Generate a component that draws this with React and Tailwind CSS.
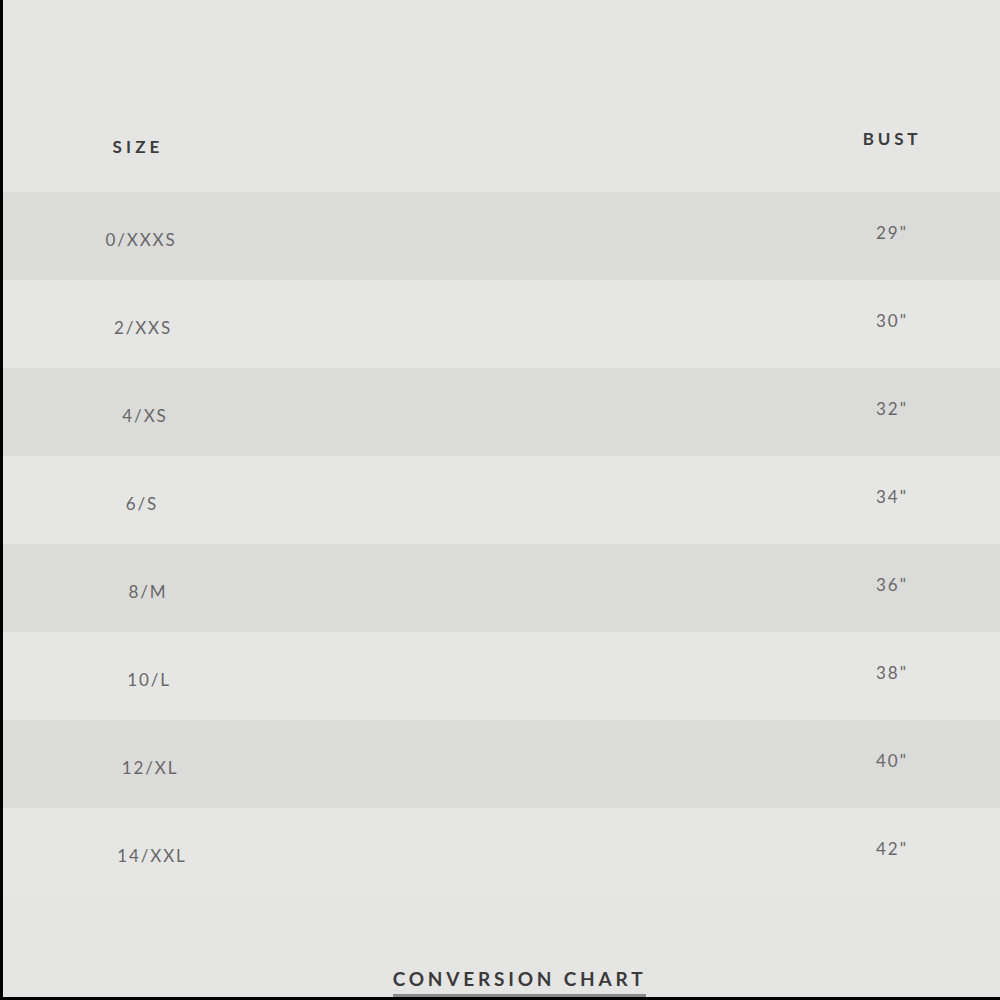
const rows = [
  ['0/XXXS', '29"', 'ml-[-6px]'],
  ['2/XXS', '30"', 'ml-[-2px]'],
  ['4/XS', '32"', 'ml-[2px]'],
  ['6/S', '34"', 'ml-[-4px]'],
  ['8/M', '36"', 'ml-[8px]'],
  ['10/L', '38"', 'ml-[10px]'],
  ['12/XL', '40"', 'ml-[12px]'],
  ['14/XXL', '42"', 'ml-[16px]'],
];

export default function App() {
  return (
    <div className="w-[1000px] h-[1000px] bg-black flex flex-col font-['Lato',sans-serif]">
      <div className="ml-[3px] h-[997px] bg-[#e5e5e3] flex flex-col">
        {/* header */}
        <div className="h-[192px] flex pt-[134px]">
          <div className="w-[282px] flex justify-center">
            <span className="ml-[-12px] text-[17px] font-bold tracking-[0.24em] text-[#3c3c3e]">SIZE</span>
          </div>
          <div className="flex-1" />
          <div className="w-[216px] flex justify-center -mt-[8px]">
            <span className="text-[17px] font-bold tracking-[0.22em] text-[#3c3c3e]">BUST</span>
          </div>
        </div>

        {rows.map(([size, bust, shift], i) => (
          <div
            key={size}
            className={
              i % 2 === 0
                ? 'h-[88px] flex items-center bg-[#dbdbd9]'
                : 'h-[88px] flex items-center bg-[#e6e6e4]'
            }
          >
            <div className="w-[282px] flex justify-center pt-[8px]">
              <span className={`${shift} text-[17px] tracking-[0.11em] text-[#68686a]`}>{size}</span>
            </div>
            <div className="flex-1" />
            <div className="w-[216px] flex justify-center -mt-[6px]">
              <span className="text-[17px] tracking-[0.12em] text-[#68686a]">{bust}</span>
            </div>
          </div>
        ))}

        <div className="flex-1 flex items-end justify-center pl-[36px]">
          <span className="text-[19px] font-bold tracking-[0.2em] text-[#3a3a3c] leading-none pb-[6px] border-b-[3px] border-[#8a8a88]">
            CONVERSION CHART
          </span>
        </div>
      </div>
    </div>
  );
}
